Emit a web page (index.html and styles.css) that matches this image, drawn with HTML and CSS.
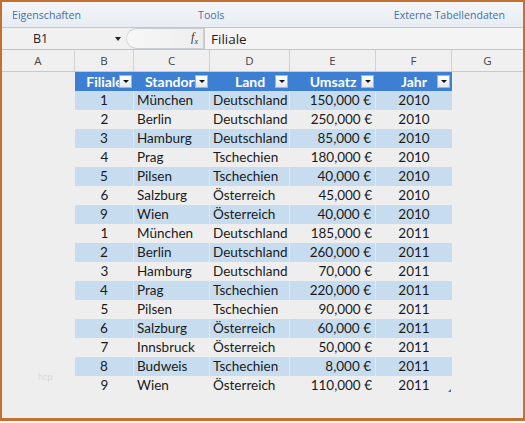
FILE: index.html
```html
<!DOCTYPE html>
<html>
<head>
<meta charset="utf-8">
<link rel="stylesheet" href="styles.css">
</head>
<body>
<div class="frame">
  <div class="ribbon">
    <span class="rl rl-eig">Eigenschaften</span>
    <span class="rl rl-tools">Tools</span>
    <span class="rl rl-ext">Externe Tabellendaten</span>
  </div>
  <div class="fbar">
    <div class="namebox"><span class="nb-text">B1</span><span class="nb-arrow"></span></div>
    <div class="pill"><span class="fx">f<sub>x</sub></span></div>
    <div class="fval">Filiale</div>
  </div>
  <div class="row colheads">
    <div class="ch">A</div><div class="ch">B</div><div class="ch">C</div><div class="ch">D</div><div class="ch">E</div><div class="ch">F</div><div class="ch last">G</div>
  </div>
  <div class="sheet">
    <div class="row thead">
      <div></div>
      <div class="th">Filiale<span class="fb"></span></div>
      <div class="th">Standort<span class="fb"></span></div>
      <div class="th">Land<span class="fb"></span></div>
      <div class="th">Umsatz<span class="fb"></span></div>
      <div class="th">Jahr<span class="fb"></span></div>
      <div></div>
    </div>
    <div class="row band"><div></div><div class="c n">1</div><div class="c l">München</div><div class="c l">Deutschland</div><div class="c r">150,000 €</div><div class="c n">2010</div><div></div></div>
    <div class="row"><div></div><div class="c n">2</div><div class="c l">Berlin</div><div class="c l">Deutschland</div><div class="c r">250,000 €</div><div class="c n">2010</div><div></div></div>
    <div class="row band"><div></div><div class="c n">3</div><div class="c l">Hamburg</div><div class="c l">Deutschland</div><div class="c r">85,000 €</div><div class="c n">2010</div><div></div></div>
    <div class="row"><div></div><div class="c n">4</div><div class="c l">Prag</div><div class="c l">Tschechien</div><div class="c r">180,000 €</div><div class="c n">2010</div><div></div></div>
    <div class="row band"><div></div><div class="c n">5</div><div class="c l">Pilsen</div><div class="c l">Tschechien</div><div class="c r">40,000 €</div><div class="c n">2010</div><div></div></div>
    <div class="row"><div></div><div class="c n">6</div><div class="c l">Salzburg</div><div class="c l">Österreich</div><div class="c r">45,000 €</div><div class="c n">2010</div><div></div></div>
    <div class="row band"><div></div><div class="c n">9</div><div class="c l">Wien</div><div class="c l">Österreich</div><div class="c r">40,000 €</div><div class="c n">2010</div><div></div></div>
    <div class="row"><div></div><div class="c n">1</div><div class="c l">München</div><div class="c l">Deutschland</div><div class="c r">185,000 €</div><div class="c n">2011</div><div></div></div>
    <div class="row band"><div></div><div class="c n">2</div><div class="c l">Berlin</div><div class="c l">Deutschland</div><div class="c r">260,000 €</div><div class="c n">2011</div><div></div></div>
    <div class="row"><div></div><div class="c n">3</div><div class="c l">Hamburg</div><div class="c l">Deutschland</div><div class="c r">70,000 €</div><div class="c n">2011</div><div></div></div>
    <div class="row band"><div></div><div class="c n">4</div><div class="c l">Prag</div><div class="c l">Tschechien</div><div class="c r">220,000 €</div><div class="c n">2011</div><div></div></div>
    <div class="row"><div></div><div class="c n">5</div><div class="c l">Pilsen</div><div class="c l">Tschechien</div><div class="c r">90,000 €</div><div class="c n">2011</div><div></div></div>
    <div class="row band"><div></div><div class="c n">6</div><div class="c l">Salzburg</div><div class="c l">Österreich</div><div class="c r">60,000 €</div><div class="c n">2011</div><div></div></div>
    <div class="row"><div></div><div class="c n">7</div><div class="c l">Innsbruck</div><div class="c l">Österreich</div><div class="c r">50,000 €</div><div class="c n">2011</div><div></div></div>
    <div class="row band"><div></div><div class="c n">8</div><div class="c l">Budweis</div><div class="c l">Tschechien</div><div class="c r">8,000 €</div><div class="c n">2011</div><div></div></div>
    <div class="row"><div class="wm">hcp</div><div class="c n">9</div><div class="c l">Wien</div><div class="c l">Österreich</div><div class="c r">110,000 €</div><div class="c n corner">2011<span class="handle"></span></div><div></div></div>
  </div>
</div>
</body>
</html>
```

FILE: styles.css
```css
html, body {
  margin: 0;
  padding: 0;
  background: #ffffff;
}
.frame {
  width: 525px;
  height: 421px;
  box-sizing: border-box;
  border: 2px solid #c6702f;
  border-bottom-width: 3px;
  background: #eeeeee;
  display: flex;
  flex-direction: column;
  overflow: hidden;
}
.ribbon {
  height: 25px;
  flex: none;
  border-bottom: 1px solid #b7c8da;
  background: linear-gradient(#f3f5f8, #e8edf3);
  display: flex;
  align-items: center;
  font-family: "Open Sans", "Noto Sans", sans-serif;
  font-size: 10.6px;
  color: #4670a8;
}
.rl { white-space: nowrap; }
.rl-eig { margin-left: 10px; }
.rl-tools { margin-left: 117px; }
.rl-ext { margin-left: auto; margin-right: 18px; }
.fbar {
  height: 21px;
  flex: none;
  border-bottom: 1px solid #c4c4c4;
  background: #f1f1f1;
  display: flex;
  align-items: stretch;
  font-family: "Open Sans", "Noto Sans", sans-serif;
}
.namebox {
  width: 124px;
  flex: none;
  display: flex;
  align-items: center;
  font-size: 12.5px;
  color: #222;
}
.nb-text { margin-left: 31px; }
.nb-arrow {
  margin-left: auto;
  margin-right: 5px;
  width: 0; height: 0;
  border-left: 3px solid transparent;
  border-right: 3px solid transparent;
  border-top: 4px solid #222;
}
.pill {
  width: 78px;
  flex: none;
  box-sizing: border-box;
  border: 1px solid #c9ced4;
  border-left: 1px solid #d6d9dc;
  border-radius: 11px 0 0 11px;
  background: linear-gradient(90deg, #f7f7f7, #eeeeee);
  display: flex;
  align-items: center;
  justify-content: flex-end;
  padding-right: 5px;
}
.fx {
  font-family: "Liberation Serif", serif;
  font-style: italic;
  font-size: 12px;
  color: #333;
}
.fx sub { font-size: 8px; }
.fval {
  flex: 1;
  border-left: 1px solid #c8c8c8;
  padding-left: 6px;
  display: flex;
  align-items: center;
  font-size: 13.5px;
  color: #222;
  background: #f4f4f4;
}
.row {
  display: grid;
  grid-template-columns: 73px 59px 76px 80px 86px 76px 1fr;
}
.colheads {
  height: 21px;
  flex: none;
  border-bottom: 1px solid #c8c8c8;
  background: #f0f0f0;
}
.ch {
  border-right: 1px solid #d2d2d2;
  display: flex;
  align-items: center;
  justify-content: center;
  font-family: "Open Sans", "Noto Sans", sans-serif;
  font-size: 11.5px;
  color: #444;
}
.ch.last { border-right: none; }
.sheet {
  flex: 1;
  background: #eeeeee;
  font-family: "Lato", "Noto Sans", sans-serif;
  font-size: 13.5px;
  color: #1a1a1a;
}
.thead { height: 19px; }
.th {
  background: #3d7fd3;
  color: #ffffff;
  font-weight: bold;
  font-size: 14px;
  text-align: center;
  line-height: 19px;
  position: relative;
  overflow: hidden;
  white-space: nowrap;
}
.fb {
  position: absolute;
  right: 2px;
  top: 3px;
  width: 13px;
  height: 13px;
  box-sizing: border-box;
  border: 1px solid #a5b3c4;
  background: linear-gradient(#ffffff, #e3e8ee);
}
.fb::after {
  content: "";
  position: absolute;
  left: 3px;
  top: 4px;
  border-left: 3px solid transparent;
  border-right: 3px solid transparent;
  border-top: 3px solid #111;
}
.row .c { height: 19px; line-height: 19px; white-space: nowrap; }
.row.band .c {
  background: #c7ddef;
  border-right: 1px solid #dde9f3;
}
.row.band .c:nth-child(6) { border-right: none; }
.c.n { text-align: center; }
.c.l { padding-left: 3px; }
.c.r { text-align: right; padding-right: 4px; }
.wm {
  font-family: "Liberation Sans", sans-serif;
  font-size: 9px;
  color: #d8d8d8;
  padding-left: 36px;
  line-height: 10px;
  margin-top: -4px;
}
.corner { position: relative; }
.handle {
  position: absolute;
  right: 1px;
  bottom: 3px;
  width: 0; height: 0;
  border-left: 3px solid transparent;
  border-bottom: 3px solid #4a6aa8;
}
```
